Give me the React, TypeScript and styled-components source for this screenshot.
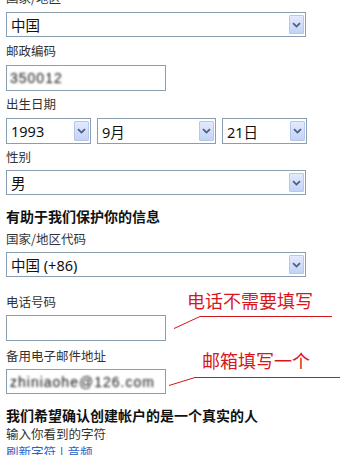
import React from "react";
import styled, { createGlobalStyle } from "styled-components";

const Global = createGlobalStyle`
  html, body { margin: 0; padding: 0; background: #fff; overflow: hidden; }
  body { font-family: "Noto Sans CJK SC", "Noto Sans", sans-serif; }
`;

const Page = styled.div`
  position: relative;
  width: 344px;
  height: 455px;
  overflow: hidden;
  display: flex;
  flex-direction: column;
  align-items: flex-start;
  padding-left: 6px;
  box-sizing: border-box;
  & > * { flex-shrink: 0; }
`;

const Label = styled.div<{ $mt: number }>`
  margin-top: ${(p) => p.$mt}px;
  font-size: 12.5px;
  line-height: 20px;
  height: 20px;
  color: #333;
  white-space: nowrap;
`;

const Heading = styled.div<{ $mt: number }>`
  margin-top: ${(p) => p.$mt}px;
  font-size: 14px;
  font-weight: 700;
  line-height: 20px;
  height: 20px;
  color: #111;
  white-space: nowrap;
`;

const SmallText = styled.div`
  font-size: 12.5px;
  line-height: 18px;
  height: 18px;
  color: #333;
`;

const Links = styled.div`
  margin-top: 0;
  font-size: 12.5px;
  line-height: 18px;
  color: #333;
  display: flex;
  gap: 4px;
`;

const Link = styled.span`
  color: #2a62c9;
`;

const SelectBox = styled.div<{ $w: number; $h: number; $mt: number }>`
  margin-top: ${(p) => p.$mt}px;
  width: ${(p) => p.$w}px;
  height: ${(p) => p.$h}px;
  box-sizing: border-box;
  border: 1px solid #8a9eb2;
  background: #fff;
  display: flex;
  align-items: center;
  justify-content: space-between;
  padding: 0 1px 0 4px;
  font-family: "Noto Sans", "Noto Sans CJK SC", sans-serif;
  font-size: 14.5px;
  color: #111;
`;

const DropButton = styled.div`
  width: 15px;
  height: calc(100% - 4px);
  box-sizing: border-box;
  border: 1px solid #b5c7ec;
  border-radius: 1px;
  background: linear-gradient(#e3ebfc, #c2d3f6);
  display: flex;
  align-items: center;
  justify-content: center;
`;

const DateRow = styled.div`
  margin-top: 4px;
  display: flex;
  gap: 6px;
`;

const Input = styled.div<{ $mt: number; $h: number }>`
  margin-top: ${(p) => p.$mt}px;
  width: 160px;
  height: ${(p) => p.$h}px;
  box-sizing: border-box;
  border: 1px solid #8a9eb2;
  background: #fff;
  display: flex;
  align-items: center;
  padding: 0 3px;
  font-family: "Liberation Sans", sans-serif;
  font-size: 14px;
  color: #111;
`;

const Masked = styled.span`
  filter: blur(0.8px);
  letter-spacing: 1px;
`;

const Note = styled.div<{ $x: number; $y: number }>`
  position: absolute;
  left: ${(p) => p.$x}px;
  top: ${(p) => p.$y}px;
  font-size: 18px;
  line-height: 22px;
  color: #d8161b;
  white-space: nowrap;
`;

const Lines = styled.svg`
  position: absolute;
  left: 0;
  top: 0;
  pointer-events: none;
`;

const Chevron = () => (
  <svg width="9" height="6" viewBox="0 0 9 6">
    <path d="M1 1.2 L4.5 4.6 L8 1.2" fill="none" stroke="#4a5f86" strokeWidth="1.8" />
  </svg>
);

const Select = ({ w, h = 25, mt, value }: { w: number; h?: number; mt: number; value: string }) => (
  <SelectBox $w={w} $h={h} $mt={mt}>
    <span>{value}</span>
    <DropButton>
      <Chevron />
    </DropButton>
  </SelectBox>
);

export default function App() {
  return (
    <>
      <Global />
      <Page>
        <Label $mt={-12}>国家/地区</Label>
        <Select w={300} mt={4} value="中国" />

        <Label $mt={4}>邮政编码</Label>
        <Input $mt={4} $h={26}>
          <Masked>350012</Masked>
        </Input>

        <Label $mt={3}>出生日期</Label>
        <DateRow>
          <Select w={85} h={26} mt={0} value="1993" />
          <Select w={119} h={26} mt={0} value="9月" />
          <Select w={85} h={26} mt={0} value="21日" />
        </DateRow>

        <Label $mt={3}>性别</Label>
        <Select w={300} mt={3} value="男" />

        <Heading $mt={11}>有助于我们保护你的信息</Heading>

        <Label $mt={3}>国家/地区代码</Label>
        <Select w={300} mt={3} value="中国 (+86)" />

        <Label $mt={15}>电话号码</Label>
        <Input $mt={3} $h={26} />

        <Label $mt={5}>备用电子邮件地址</Label>
        <Input $mt={3} $h={25}>
          <Masked>zhiniaohe@126.com</Masked>
        </Input>

        <Heading $mt={11}>我们希望确认创建帐户的是一个真实的人</Heading>
        <SmallText>输入你看到的字符</SmallText>
        <Links>
          <Link>刷新字符</Link>
          <span>|</span>
          <Link>音频</Link>
        </Links>

        <Note $x={187} $y={289}>电话不需要填写</Note>
        <Note $x={202} $y={349}>邮箱填写一个</Note>
        <Lines width="344" height="455" viewBox="0 0 344 455">
          <polyline points="174,328.5 200,316.5 332,316.5" fill="none" stroke="#d0161b" strokeWidth="1" />
          <polyline points="169,385.5 195,377.5 340,377.5" fill="none" stroke="#d0161b" strokeWidth="1" />
        </Lines>
      </Page>
    </>
  );
}
